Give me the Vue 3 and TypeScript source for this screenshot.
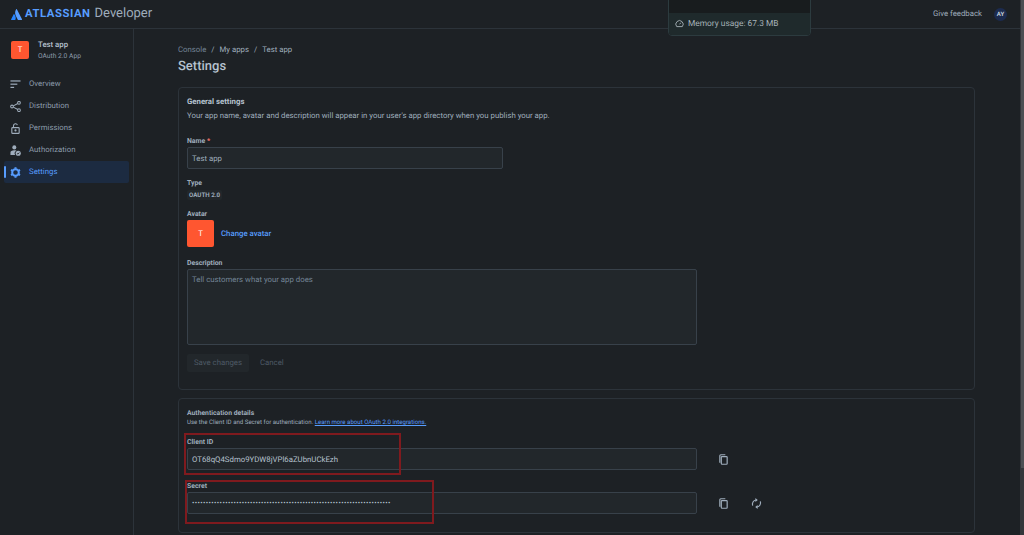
<script setup lang="ts">
interface NavItem { label: string; icon: string; active?: boolean }
const nav: NavItem[] = [
  { label: 'Overview', icon: 'overview' },
  { label: 'Distribution', icon: 'share' },
  { label: 'Permissions', icon: 'lock' },
  { label: 'Authorization', icon: 'person' },
  { label: 'Settings', icon: 'gear', active: true },
]
const secret = '•'.repeat(72)
</script>

<template>
  <div class="page">
    <header class="topbar">
      <div class="brand">
        <svg class="mark" viewBox="0 0 16 16" width="11" height="11">
          <path fill="#2684ff" d="M4.7 7.6c-.2-.3-.6-.2-.8.1L.1 15.1c-.2.4.1.9.5.9h5.2c.2 0 .4-.1.5-.3 1.1-2.3.5-5.8-1.6-8.1z" />
          <path fill="#579dff" d="M7.5.3C5.5 3.5 5.6 7 7 9.800l2.900 5.900c.1.200.3.300.5.300h5.200c.4 0 .7-.5.500-.900L8.500.3C8.300-.1 7.700-.1 7.500.3z" />
        </svg>
        <span class="brand-name">ATLASSIAN</span>
        <span class="brand-sub">Developer</span>
      </div>
      <div class="top-right">
        <span class="feedback">Give feedback</span>
        <span class="user">AY</span>
      </div>
      <div class="popover">
        <div class="pop-top"></div>
        <div class="pop-foot">
          <svg viewBox="0 0 16 16" width="9" height="9" fill="none" stroke="currentColor" stroke-width="1.600">
            <path d="M3 13.500a6.500 6.500 0 1 1 10 0z" />
            <path d="M8 9.500l2.500-3" />
          </svg>
          <span>Memory usage: 67.3 MB</span>
        </div>
      </div>
    </header>

    <div class="body">
      <aside class="sidebar">
        <div class="app">
          <div class="app-avatar">T</div>
          <div class="app-text">
            <div class="app-name">Test app</div>
            <div class="app-type">OAuth 2.0 App</div>
          </div>
        </div>
        <nav class="nav">
          <div v-for="item in nav" :key="item.label" class="nav-item" :class="{ active: item.active }">
            <span class="nav-icon">
              <svg v-if="item.icon === 'overview'" viewBox="0 0 12 12" width="11" height="11" fill="currentColor">
                <rect x="0.500" y="1.500" width="11" height="1.300" /><rect x="0.500" y="5" width="7.500" height="1.300" /><rect x="0.500" y="8.500" width="4" height="1.300" />
              </svg>
              <svg v-else-if="item.icon === 'share'" viewBox="0 0 12 12" width="11" height="11" fill="none" stroke="currentColor" stroke-width="1.100">
                <circle cx="2.200" cy="6" r="1.500" /><circle cx="9.800" cy="2" r="1.500" /><circle cx="9.800" cy="10" r="1.500" /><path d="M3.600 5.300l4.900-2.600M3.600 6.700l4.900 2.600" />
              </svg>
              <svg v-else-if="item.icon === 'lock'" viewBox="0 0 12 12" width="11" height="11" fill="none" stroke="currentColor" stroke-width="1.200">
                <rect x="2" y="5" width="8" height="6.300" rx="0.800" /><path d="M3.800 5V3a2.200 2.200 0 0 1 4.300-.6" /><circle cx="6" cy="8.100" r="0.600" fill="currentColor" />
              </svg>
              <svg v-else-if="item.icon === 'person'" viewBox="0 0 12 12" width="11" height="11" fill="currentColor">
                <circle cx="4.700" cy="2.600" r="2.200" /><path d="M0.500 11V8.300C0.500 6.800 2 5.800 4.700 5.800c1 0 1.800.1 2.400.4A3.500 3.500 0 0 0 5.600 11z" /><circle cx="9" cy="9" r="2.800" /><path d="M7.700 9l1 1 1.500-1.800" fill="none" stroke="#1d2125" stroke-width="0.900" />
              </svg>
              <svg v-else viewBox="0 0 12 12" width="11" height="11" fill="none" stroke="currentColor">
                <circle cx="6" cy="6" r="3.600" stroke-width="2.200" /><path d="M6 .3v1.600M6 10.100v1.600M1.100 3.200l1.400.8M9.500 8l1.400.8M1.100 8.800l1.400-.8M9.500 4l1.400-.8" stroke-width="2.200" />
              </svg>
            </span>
            <span>{{ item.label }}</span>
          </div>
        </nav>
      </aside>

      <main class="main">
        <div class="crumbs">
          <span class="crumb-first">Console</span><i>/</i><span>My apps</span><i>/</i><span>Test app</span>
        </div>
        <h1 class="title">Settings</h1>

        <section class="card general">
          <h2 class="card-title">General settings</h2>
          <p class="card-desc">Your app name, avatar and description will appear in your user's app directory when you publish your app.</p>

          <label class="label name-label">Name<b> *</b></label>
          <div class="input name-input">Test app</div>

          <label class="label type-label">Type</label>
          <span class="badge">OAUTH 2.0</span>

          <label class="label avatar-label">Avatar</label>
          <div class="avatar-row">
            <div class="big-avatar">T</div>
            <a class="link-strong">Change avatar</a>
          </div>

          <label class="label desc-label">Description</label>
          <div class="input textarea">Tell customers what your app does</div>

          <div class="actions">
            <span class="btn-save">Save changes</span>
            <span class="btn-cancel">Cancel</span>
          </div>
        </section>

        <section class="card auth">
          <h2 class="auth-title">Authentication details</h2>
          <p class="auth-desc">Use the Client ID and Secret for authentication. <a>Learn more about OAuth 2.0 integrations.</a></p>

          <label class="label client-label">Client ID</label>
          <div class="field-row">
            <div class="input wide">OT68qQ4Sdmo9YDW8jVPl6aZUbnUCkEzh</div>
            <span class="icon-btn">
              <svg viewBox="0 0 12 12" width="11" height="11" fill="none" stroke="currentColor" stroke-width="1.300">
                <rect x="3.600" y="2.800" width="6.400" height="8.400" rx="0.800" /><path d="M2 9.500V1.800C2 1.200 2.400.8 3 .8h5" />
              </svg>
            </span>
          </div>

          <label class="label secret-label">Secret</label>
          <div class="field-row">
            <div class="input wide secret">{{ secret }}</div>
            <span class="icon-btn">
              <svg viewBox="0 0 12 12" width="11" height="11" fill="none" stroke="currentColor" stroke-width="1.300">
                <rect x="3.600" y="2.800" width="6.400" height="8.400" rx="0.800" /><path d="M2 9.500V1.800C2 1.200 2.400.8 3 .8h5" />
              </svg>
            </span>
            <span class="icon-btn second">
              <svg viewBox="0 0 12 12" width="11" height="11" fill="none" stroke="currentColor" stroke-width="1.300">
                <path d="M1.800 8.300C.900 5.500 2.500 2.600 5.500 2.200M10.200 3.700c.9 2.800-.7 5.700-3.700 6.100" /><path d="M4.800 0v4.400L7.400 2.200zM7.200 12V7.600L4.600 9.800z" fill="currentColor" stroke="none" />
              </svg>
            </span>
          </div>

          <div class="mark-box mark-client"></div>
          <div class="mark-box mark-secret"></div>
        </section>
      </main>
    </div>
    <div class="scrollbar">
      <div class="thumb"></div>
    </div>
  </div>
</template>

<style>
html, body { margin: 0; background: #1d2125; overflow: hidden; }
</style>

<style scoped>
.page {
  position: relative;
  width: 1024px;
  height: 535px;
  overflow: hidden;
  background: #1d2125;
  color: #b6c2cf;
  font-family: Roboto, "Liberation Sans", sans-serif;
  font-size: 7.800px;
  line-height: 12px;
  text-rendering: geometricPrecision;
}
.topbar {
  position: relative;
  display: flex;
  align-items: center;
  justify-content: space-between;
  height: 29px;
  padding: 0 17px 0 11px;
  box-sizing: border-box;
  border-bottom: 1px solid #2c333a;
}
.brand { display: flex; align-items: center; }
.mark { margin-right: 3px; }
.brand-name { color: #579dff; font-weight: 700; font-size: 11.300px; letter-spacing: 0.550px; }
.brand-sub { color: #9fadbc; font-size: 13px; margin-left: 4px; }
.top-right { display: flex; align-items: center; color: #9fadbc; }
.feedback { font-size: 7.800px; }
.user {
  margin-left: 12px;
  width: 13px; height: 13px;
  border-radius: 50%;
  background: #1c2b4f;
  color: #c7d1db;
  font-size: 6px;
  font-weight: 700;
  line-height: 13px;
  text-align: center;
}
.popover {
  position: absolute;
  left: 668px;
  top: -2px;
  width: 143px;
  height: 38px;
  box-sizing: border-box;
  border: 1px solid #2c3b3f;
  border-radius: 0 0 4px 4px;
  overflow: hidden;
  background: #181c1e;
}
.pop-top { height: 14px; }
.pop-foot {
  display: flex;
  align-items: center;
  gap: 4px;
  height: 22px;
  padding: 0 0 1px 6px;
  box-sizing: border-box;
  background: #1f2a2c;
  color: #a6b1b7;
  font-size: 8.400px;
}
.body { display: flex; height: 506px; }
.sidebar {
  width: 134px;
  flex: none;
  box-sizing: border-box;
  border-right: 1px solid #2c333a;
  padding-top: 12px;
}
.app { display: flex; padding-left: 11px; }
.app-avatar {
  width: 18px; height: 18px;
  border-radius: 2px;
  background: #ff5630;
  color: #fff;
  font-size: 7.800px;
  line-height: 18px;
  text-align: center;
}
.app-text { margin-left: 9px; margin-top: -1px; }
.app-name { font-weight: 500; font-size: 7.800px; line-height: 10px; color: #b6c2cf; }
.app-type { font-size: 6.700px; line-height: 12px; color: #8c9bab; }
.nav { margin: 11px 4px 0; }
.nav-item {
  position: relative;
  display: flex;
  align-items: center;
  height: 22px;
  padding-left: 6px;
  color: #8c9bab;
  font-size: 7.800px;
  border-radius: 2px;
}
.nav-icon { display: flex; width: 19px; color: #9fadbc; }
.nav-item.active { background: #1c2b41; color: #579dff; }
.nav-item.active .nav-icon { color: #579dff; }
.nav-item.active::before {
  content: "";
  position: absolute;
  left: 0;
  top: 5px;
  width: 2px;
  height: 12px;
  background: #579dff;
  border-radius: 1px;
}
.main { width: 797px; margin-left: 44px; padding-top: 15px; }
.crumbs { display: flex; color: #9fadbc; line-height: 12px; }
.crumbs i { font-style: normal; margin: 0 5px; }
.crumb-first { color: #738496; }
.title { margin: 1px 0 0; font-size: 13px; line-height: 20px; font-weight: 500; color: #b6c2cf; }
.card {
  position: relative;
  box-sizing: border-box;
  border: 1px solid #2c333a;
  border-radius: 4px;
  padding: 0 8px;
}
.general { height: 303px; margin-top: 10px; padding-top: 8px; }
.auth { height: 135px; margin-top: 8px; padding-top: 9px; }
.card-title { margin: 0; font-size: 7.800px; line-height: 12px; font-weight: 700; color: #b6c2cf; }
.card-desc { margin: 2px 0 0; line-height: 12px; color: #9fadbc; }
.label { display: block; font-size: 6.900px; font-weight: 700; line-height: 10px; color: #9fadbc; }
.label b { color: #f87168; }
.name-label { margin-top: 14px; }
.input {
  box-sizing: border-box;
  height: 22px;
  padding-left: 4px;
  background: #22272b;
  border: 1px solid #38414a;
  border-radius: 2px;
  line-height: 21px;
  color: #9fadbc;
}
.name-input { width: 316px; margin-top: 1px; }
.type-label { margin-top: 9px; }
.badge {
  display: inline-block;
  margin-top: 2px;
  padding: 0 2px;
  height: 10px;
  background: #22272b;
  border-radius: 2px;
  font-size: 6.200px;
  font-weight: 700;
  line-height: 10px;
  color: #9fadbc;
  vertical-align: top;
}
.avatar-label { margin-top: 9px; }
.avatar-row { display: flex; align-items: center; margin-top: 1px; }
.big-avatar {
  width: 27px; height: 27px;
  border-radius: 2px;
  background: #ff5630;
  color: #fff;
  line-height: 27px;
  text-align: center;
}
.link-strong { margin-left: 7px; color: #579dff; font-weight: 500; }
.desc-label { margin-top: 11px; }
.textarea { width: 510px; height: 76px; margin-top: 1px; line-height: 19px; color: #738496; }
.actions { display: flex; align-items: center; margin-top: 9px; }
.btn-save {
  width: 62px; height: 18px;
  border-radius: 2px;
  background: #22272b;
  color: #4e5a66;
  line-height: 18px;
  text-align: center;
}
.btn-cancel { margin-left: 11px; color: #4e5a66; }
.auth-title { margin: 0; font-size: 6.800px; line-height: 10px; font-weight: 700; color: #9fadbc; }
.auth-desc { margin: 0; font-size: 6.100px; line-height: 10px; color: #9fadbc; }
.auth-desc a { color: #579dff; text-decoration: underline; }
.client-label { margin-top: 9px; }
.secret-label { margin-top: 11px; }
.field-row { display: flex; align-items: center; margin-top: 1px; }
.wide { width: 510px; color: #b6c2cf; }
.secret { font-size: 7px; letter-spacing: 0.400px; }
.icon-btn { display: flex; margin-left: 21px; color: #9fadbc; }
.icon-btn.second { margin-left: 22px; }
.mark-box { position: absolute; box-sizing: border-box; border: 2px solid #7f1a1e; pointer-events: none; }
.mark-client { left: 5px; top: 34px; width: 217px; height: 42px; }
.mark-secret { left: 6px; top: 81px; width: 249px; height: 44px; }
.scrollbar { position: absolute; right: 0; top: 0; width: 4px; height: 535px; background: #33363a; }
.thumb { width: 3px; height: 468px; margin-left: 1px; background: #4c4f53; }
</style>
